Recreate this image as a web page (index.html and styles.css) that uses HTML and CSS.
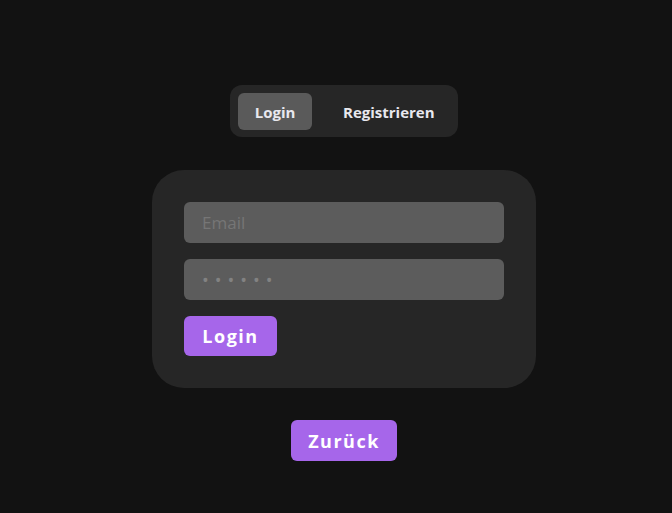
FILE: index.html
```html
<!DOCTYPE html>
<html lang="de">
<head>
<meta charset="utf-8">
<link rel="stylesheet" href="styles.css">
</head>
<body>
<main class="page">
  <div class="tabs">
    <button class="tab active">Login</button>
    <button class="tab other">Registrieren</button>
  </div>
  <form class="card">
    <input class="field" type="text" placeholder="Email">
    <input class="field pw" type="password" value="aaaaaa">
    <div><button type="button" class="btn">Login</button></div>
  </form>
  <button class="btn back">Zurück</button>
</main>
</body>
</html>
```
FILE: styles.css
```css
html, body {
  margin: 0;
  padding: 0;
  background: #121212;
  height: 100%;
}
body {
  font-family: "Open Sans", "Noto Sans", sans-serif;
}
.page {
  display: flex;
  flex-direction: column;
  align-items: center;
  padding: 85px 0 0 16px;
  box-sizing: border-box;
}
.tabs {
  display: flex;
  background: #262626;
  border-radius: 12px;
  padding: 8px;
  width: 228px;
  height: 52px;
  box-sizing: border-box;
}
.tab {
  border: none;
  background: transparent;
  color: #e8e8ee;
  font-family: inherit;
  font-weight: 700;
  font-size: 15px;
  border-radius: 6px;
  height: 37px;
  padding: 0;
  cursor: pointer;
}
.tab.active {
  background: #5a5a5a;
  width: 74px;
}
.tab.other {
  flex: 1;
  text-align: left;
  padding-left: 31px;
  white-space: nowrap;
}
.card {
  margin-top: 33px;
  width: 384px;
  box-sizing: border-box;
  background: #262626;
  border-radius: 32px;
  padding: 32px;
  display: flex;
  flex-direction: column;
  gap: 16px;
}
.field {
  height: 41px;
  border: none;
  border-radius: 6px;
  background: #5c5c5c;
  color: #7a7a7a;
  font-family: inherit;
  font-size: 17px;
  padding: 0 18px;
  box-sizing: border-box;
  outline: none;
  width: 100%;
}
.field::placeholder {
  color: #767676;
}
.field.pw {
  font-size: 18px;
  letter-spacing: 6px;
  color: #828282;
}
.btn {
  background: #a666ea;
  color: #ffffff;
  border: none;
  border-radius: 6px;
  font-family: inherit;
  font-weight: 700;
  font-size: 18px;
  letter-spacing: 1.5px;
  height: 40px;
  padding: 0;
  cursor: pointer;
}
.card .btn {
  width: 93px;
}
.back {
  margin-top: 32px;
  width: 106px;
  height: 41px;
}
```
